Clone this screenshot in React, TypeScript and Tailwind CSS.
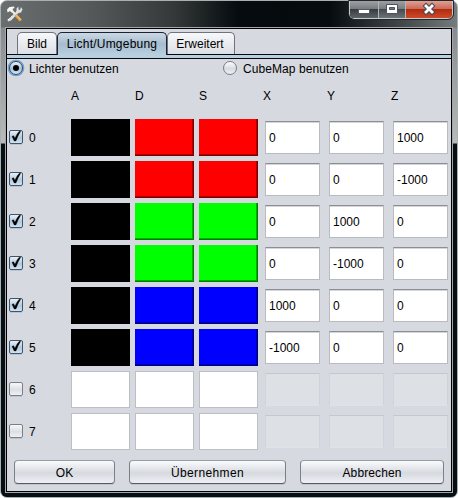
import type { ReactNode } from "react";

const red = "bg-[#ff0000] border-[#800000] shadow-[inset_-1px_-1px_0_#b20000]";
const green = "bg-[#00ff00] border-[#008000] shadow-[inset_-1px_-1px_0_#00b200]";
const blue = "bg-[#0000ff] border-[#000080] shadow-[inset_-1px_-1px_0_#0000b2]";

const rows = [
  { c: red, v: ["0", "0", "1000"] },
  { c: red, v: ["0", "0", "-1000"] },
  { c: green, v: ["0", "1000", "0"] },
  { c: green, v: ["0", "-1000", "0"] },
  { c: blue, v: ["1000", "0", "0"] },
  { c: blue, v: ["-1000", "0", "0"] },
  { c: "", v: null },
  { c: "", v: null },
];

function Check({ on }: { on: boolean }) {
  return (
    <svg width="16" height="16" viewBox="0 0 16 16" className="shrink-0">
      <defs>
        <linearGradient id="cOn" x1="0" y1="0" x2="0" y2="1">
          <stop offset="0" stopColor="#eef4f9" /><stop offset="0.55" stopColor="#b3c8da" /><stop offset="1" stopColor="#d5e5f2" />
        </linearGradient>
        <linearGradient id="cOff" x1="0" y1="0" x2="0" y2="1">
          <stop offset="0" stopColor="#fafafb" /><stop offset="0.55" stopColor="#dcdfe4" /><stop offset="1" stopColor="#f0f2f6" />
        </linearGradient>
      </defs>
      <path d="M2 15.5h12" stroke="#bfc3cc" />
      <rect x="1.5" y="1.5" width="13" height="13" rx="1.5" fill={on ? "url(#cOn)" : "url(#cOff)"} stroke={on ? "#3b5671" : "#7b7f87"} />
      {on && <path d="M4 7.2 5.6 6.8 6.9 9.2Q8.6 5 11.2 2.2L12.8 2.2Q9.8 6.6 8 12H6.2Z" fill="#000" stroke="#000" strokeWidth=".3" />}
    </svg>
  );
}

function Radio({ on }: { on: boolean }) {
  return (
    <svg width="18" height="18" viewBox="0 0 18 18" className="shrink-0">
      <defs>
        <linearGradient id="rOff" x1="0" y1="0" x2="0" y2="1">
          <stop offset="0" stopColor="#ffffff" /><stop offset="0.55" stopColor="#d8dce2" /><stop offset="1" stopColor="#f0f2f6" />
        </linearGradient>
        <linearGradient id="rOn" x1="0" y1="0" x2="0" y2="1">
          <stop offset="0" stopColor="#f2f7fb" /><stop offset="0.55" stopColor="#a9c0d4" /><stop offset="1" stopColor="#d5e8f7" />
        </linearGradient>
      </defs>
      {on && <circle cx="9" cy="9" r="7.5" fill="none" stroke="#73a4d1" strokeWidth="1.7" />}
      <circle cx="9" cy="9" r="6.5" fill={on ? "url(#rOn)" : "url(#rOff)"} stroke={on ? "#2e4a66" : "#777b84"} />
      {on && <circle cx="9" cy="9" r="3" fill="#000" />}
    </svg>
  );
}

function Tab({ children, className }: { children: ReactNode; className: string }) {
  return (
    <div className={"flex justify-center rounded-t-[5px] border border-b-0 pt-1 " + className}>
      {children}
    </div>
  );
}

function PushButton({ children, className }: { children: ReactNode; className: string }) {
  return (
    <button className={"h-6 rounded-[4px] border border-t-[#989ba3] border-x-[#7b7f87] border-b-[#555a63] bg-linear-to-b from-[#fafbfc] via-[#d6d9df] via-55% to-[#eef0f4] pt-px shadow-[0_1px_0_#c1c5ce] " + className}>
      {children}
    </button>
  );
}

function TitleBar() {
  return (
    <header className="flex h-[26px] justify-between">
      <svg width="18" height="18" viewBox="0 0 18 18" className="mt-[4px] ml-[5px]">
        <path d="M1 4.5 3.5 2 8 1.5 8.5 3 6.5 4 7.5 6.5 5.5 7.5 4 6 1.5 7.5Z" fill="#f6f7f7" />
        <path d="M6 6 10 10" stroke="#eceeee" strokeWidth="2.2" />
        <path d="M10.5 6.5V3.5L12.5 1.5V4.5L14 5L15 2L16.5 4.5L15 7.5L12.5 8L5 15.5L2 16.5L1.5 14.5L5 12Z" fill="#dfe2e3" />
        <path d="M2 15 11 6" stroke="#fff" strokeDasharray="1 1.2" />
        <path d="M9.5 10 14.8 15.5" stroke="#e9a43f" strokeWidth="2.8" />
        <path d="M10.2 10 15 14.8" stroke="#ffd27d" strokeWidth=".8" />
      </svg>
      <div className="mr-[4px] flex h-[18px] w-[104px] overflow-hidden rounded-b-[5px] border border-t-0 border-[#c7cacb] outline outline-[#22282a]">
        <div className="flex w-[29px] justify-center border-r border-[#b2b5b7] bg-[linear-gradient(#9da1a3_0,#787d80_45%,#343a3d_46%,#5d6467_100%)]">
          <svg width="14" height="17"><rect x="1.5" y="8.5" width="11" height="4" fill="#fff" stroke="#555b64" /></svg>
        </div>
        <div className="flex w-[27px] justify-center border-r border-[#b2b5b7] bg-[linear-gradient(#9da1a3_0,#787d80_45%,#42484b_46%,#6d7477_100%)]">
          <svg width="14" height="17"><path d="M1.5 3.5h11v9h-11z" fill="#fff" stroke="#4d535c" /><path d="M4.5 6.5h5v2h-5z" fill="#777" stroke="#4d535c" /></svg>
        </div>
        <div className="flex flex-1 justify-center bg-[linear-gradient(#e0a092_0,#cc6a58_45%,#b0290f_46%,#cc4a28_100%)]">
          <svg width="16" height="17"><path d="M5 5 11 11M11 5 5 11" stroke="#454b59" strokeWidth="4.8" strokeLinecap="square" /><path d="M5 5 11 11M11 5 5 11" stroke="#fff" strokeWidth="2.8" strokeLinecap="square" /></svg>
        </div>
      </div>
    </header>
  );
}

export default function App() {
  return (
    <div className="h-[498px] w-[458px] bg-white font-['Liberation_Sans',Arial,sans-serif] text-[12px] leading-[14px] text-black">
      <div className="h-[498px] w-[458px] rounded-[7px] border border-[#aab0b1] bg-[linear-gradient(90deg,#6a6e6f_0%,#545858_20%,#343838_38%,#050b0e_52%,#060b0d_72%,#4a5052_90%,#777b7d_100%)]">
        <div className="h-full w-full rounded-[6px] bg-[linear-gradient(#0000_0,#0000_26px,#888c8e_27px,#b8babb_142px,#080f14_143px,#080f14_100%)]">
          <TitleBar />
          <main className="ml-1 h-[466px] w-[448px] border border-[#a4a7a9]">
            <div className="h-full border border-black bg-[#d6d9df]">
              <div className="flex h-[25px] items-end pl-[10px]">
                <Tab className="h-[22px] w-[40px] border-[#6f737c] bg-linear-to-b from-[#f7f8fa] to-[#dcdfe5]">Bild</Tab>
                <Tab className="z-10 -mb-px h-[23px] w-[110px] border-[#192334] bg-linear-to-b from-[#cbd8e3] via-[#a6bdd0] to-[#b8cfe0] tracking-[.22px]">Licht/Umgebung</Tab>
                <Tab className="h-[22px] w-[68px] border-[#6f737c] bg-linear-to-b from-[#f7f8fa] to-[#dcdfe5] pr-[2px]">Erweitert</Tab>
              </div>
              <div className="h-[5px] border-y border-[#05090f] bg-[#b8cfe0]" />
              <div className="flex h-[18px] items-center tracking-[.07px]">
                <div className="flex w-[214px] items-center gap-[4px]"><Radio on /><span className="pt-px">Lichter benutzen</span></div>
                <div className="flex items-center gap-[4px]"><Radio on={false} /><span className="pt-px">CubeMap benutzen</span></div>
              </div>
              <div className="flex h-[39px] items-center pb-px pl-[64px]">
                {["A", "D", "S", "X", "Y", "Z"].map((h) => <span key={h} className="w-16 shrink-0 last:w-8">{h}</span>)}
              </div>
              {rows.map((r, i) => (
                <div key={i} className="flex h-[42px] items-center">
                  <div className="flex w-[64px] items-center gap-[5px] pl-px"><Check on={!!r.v} /><span className="pt-[2px]">{i}</span></div>
                  <div className="flex gap-[5px]">
                    {[0, 1, 2].map((n) => (
                      <div key={n} className={"h-[37px] w-[59px] " + (!r.v ? "border border-[#bcbfc3] bg-white" : n === 0 ? "bg-black" : "border-r border-b " + r.c)} />
                    ))}
                  </div>
                  <div className="ml-[7px] flex gap-[9px]">
                    {[0, 1, 2].map((n) => (
                      <div key={n} className={"flex h-[33px] w-[55px] items-center border pt-[2px] pl-[3px] " + (r.v ? "border-[#b8bbc0] border-t-[#8b8e94] bg-white shadow-[inset_0_1px_0_#d5d6d8]" : "border-[#d0d3d8] border-t-[#c4c7cc] border-b-[#dfe2e6] bg-[#dde0e5]")}>
                        {r.v?.[n]}
                      </div>
                    ))}
                  </div>
                </div>
              ))}
              <div className="mt-[8px] flex gap-[14px] pl-[7px]">
                <PushButton className="w-[101px]">OK</PushButton>
                <PushButton className="w-[157px] tracking-[.38px]">Übernehmen</PushButton>
                <PushButton className="w-[144px] tracking-[.1px]">Abbrechen</PushButton>
              </div>
            </div>
          </main>
        </div>
      </div>
    </div>
  );
}
